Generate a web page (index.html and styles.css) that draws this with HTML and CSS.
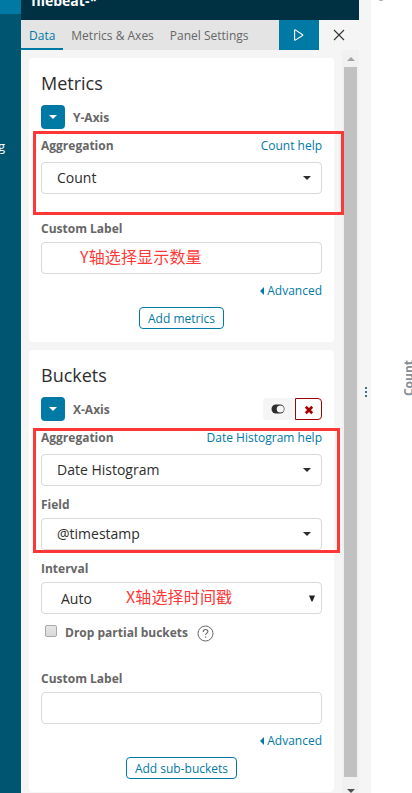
FILE: index.html
```html
<!DOCTYPE html>
<html lang="zh">
<head>
<meta charset="utf-8">
<title>Visualize editor</title>
<link rel="stylesheet" href="styles.css">
</head>
<body>
<div class="app">
  <nav class="nav"><div class="nav-active"></div><span class="nav-text">g</span></nav>
  <aside class="sidebar">
    <header class="index-name"><span>filebeat-*</span></header>
    <div class="tabs">
      <div class="tab active">Data</div>
      <div class="tab">Metrics &amp; Axes</div>
      <div class="tab">Panel Settings</div>
      <div class="run"><svg width="12" height="12" viewBox="0 0 12 12"><path d="M1.600 1.500v9.200q0 .7.7.4l7.300-4.600q.6-.4 0-.8L2.300.9q-.7-.3-.7.6z" fill="none" stroke="#fff" stroke-width="1.100"/></svg></div>
      <div class="close"><svg width="12" height="12" viewBox="0 0 12 12"><path d="M1 1l10 10M11 1L1 11" stroke="#333" stroke-width="1.100"/></svg></div>
    </div>
    <div class="body">
      <div class="cards">
        <section class="card">
          <h2>Metrics</h2>
          <div class="agg-head"><button class="toggle"><i class="caret"></i></button><b>Y-Axis</b></div>
          <div class="label first"><b>Aggregation</b><a>Count help</a></div>
          <div class="field">Count<i class="caret"></i></div>
          <div class="label custom-metric"><b>Custom Label</b></div>
          <div class="field"><span class="note note-y">Y轴选择显示数量</span></div>
          <div class="advanced"><i class="left"></i>Advanced</div>
          <button class="add add-metric">Add metrics</button>
        </section>
        <section class="card">
          <h2>Buckets</h2>
          <div class="agg-head"><button class="toggle"><i class="caret"></i></button><b>X-Axis</b>
            <div class="actions">
              <span class="switch"><svg width="14" height="10" viewBox="0 0 14 10"><path d="M5 .5h4a4.500 4.500 0 0 1 0 9H5a4.500 4.500 0 0 1 0-9z" fill="#2d2d2d"/><circle cx="9.300" cy="5" r="3.600" fill="#f5f5f5"/></svg></span>
              <span class="remove"><svg width="10" height="10" viewBox="0 0 10 10"><path d="M1.800 1.800l6.400 6.400M8.200 1.800L1.800 8.200" stroke="#a30000" stroke-width="2.700"/></svg></span>
            </div>
          </div>
          <div class="label first"><b>Aggregation</b><a>Date Histogram help</a></div>
          <div class="field">Date Histogram<i class="caret"></i></div>
          <div class="label"><b>Field</b></div>
          <div class="field">@timestamp<i class="caret"></i></div>
          <div class="label"><b>Interval</b></div>
          <div class="field native">Auto<span class="note note-x">X轴选择时间戳</span><svg class="arrow" width="6" height="7" viewBox="0 0 6 7"><path d="M0 .5h6L3.500 6.500h-1z" fill="#222"/></svg></div>
          <div class="check"><i class="box"></i><b>Drop partial buckets</b><svg width="17" height="17" viewBox="0 0 17 17" fill="none" stroke="#666"><circle cx="8.500" cy="8.500" r="7.500"/><path d="M6.200 6.900c0-3.200 4.700-3 4.700-.4 0 1.700-2.300 1.600-2.300 3.600M8.600 11.500v1.300" stroke-width="1.100"/></svg></div>
          <div class="label custom-bucket"><b>Custom Label</b></div>
          <div class="field"></div>
          <div class="advanced"><i class="left"></i>Advanced</div>
          <button class="add add-bucket">Add sub-buckets</button>
        </section>
      </div>
      <div class="scrollbar"><i class="up"></i><div class="thumb"></div><i class="down"></i></div>
    </div>
  </aside>
  <div class="resizer"><i></i><i></i><i></i></div>
  <main class="chart"><i class="dot"></i><span class="axis">Count</span></main>
  <div class="mark mark-y"></div>
  <div class="mark mark-x"></div>
</div>
</body>
</html>
```
FILE: styles.css
```css
* { box-sizing: border-box; }
body { margin: 0; font: 12px/18px "Open Sans", "Noto Sans CJK SC", sans-serif; color: #2d2d2d; background: #fff; }
i { display: block; }
b { color: #666; font-weight: 700; }
button { font: inherit; padding: 0; }
.app { position: relative; display: flex; width: 412px; height: 793px; overflow: hidden; }
.nav { position: relative; width: 21px; background: #005571; color: #fff; overflow: hidden; }
.nav-active { height: 14px; background: #0079a5; }
.nav-text { position: absolute; left: -2px; top: 137px; font-size: 13px; }
.sidebar { width: 338px; background: #f5f5f5; }
.index-name { height: 20px; padding-left: 10px; overflow: hidden; background: #003142; color: #fff; font-size: 14px; font-weight: 700; line-height: 20px; }
.index-name span { display: block; margin-top: -9px; }
.tabs { display: flex; height: 30px; background: #e4e4e4; color: #666; line-height: 31px; }
.tab { padding: 0 8px; white-space: nowrap; }
.active { color: #0079a5; border-bottom: 2px solid #0079a5; }
.run, .close { display: flex; align-items: center; justify-content: center; width: 40px; background: #0079a5; }
.run { margin-left: auto; }
.close { background: #f5f5f5; }
.body { display: flex; justify-content: space-between; height: 743px; }
.cards { display: flex; flex-direction: column; gap: 8px; width: 305px; margin: 8px 0 0 8px; }
.card { flex: none; padding: 12px 12px 13px; border-radius: 4px; background: #fff; }
h2 { height: 27px; margin: 0 0 8px; font-size: 18px; font-weight: 400; line-height: 27px; }
.agg-head { display: flex; align-items: center; gap: 8px; height: 24px; }
.agg-head b { padding-top: 2px; }
.toggle { display: flex; align-items: center; justify-content: center; width: 24px; height: 24px; border: 0; border-radius: 4px; background: #0079a5; color: #fff; }
.caret { width: 0; height: 0; border: 4px solid transparent; border-top-color: currentColor; border-bottom: 0; }
.actions { display: flex; gap: 2px; margin-left: auto; }
.switch, .remove { display: flex; align-items: center; justify-content: center; height: 22px; }
.switch { width: 30px; border-radius: 4px 0 0 4px; background: #f5f5f5; }
.remove { width: 27px; padding-top: 2px; border: 1px solid #a30000; border-radius: 0 4px 4px 0; }
.label { display: flex; justify-content: space-between; height: 18px; margin: 10px 0 4px; }
.first { margin: 8px 0 7px; }
.custom-metric { margin-top: 26px; }
.custom-bucket { margin-top: 28px; }
.label a, .advanced { color: #0079a5; }
.field { position: relative; display: flex; align-items: center; justify-content: space-between; height: 32px; padding: 0 10px 0 15px; border: 1px solid #d9d9d9; border-radius: 4px; font-size: 14px; }
.native { padding: 1px 6px 0 19px; }
.note { position: absolute; top: 1px; font-size: 16px; line-height: 24px; color: #ff3737; white-space: nowrap; font-family: "Noto Sans CJK SC", sans-serif; letter-spacing: .15px; }
.note-y { left: 38px; }
.note-x { left: 84px; }
.check { display: flex; align-items: center; height: 18px; margin-top: 10px; padding-left: 4px; }
.box { width: 12px; height: 12px; margin: -5px 8px 0 0; border: 1px solid #a9a9a9; border-radius: 2px; background: linear-gradient(#e6e6e6, #d9d9d9); }
.check svg { margin: 1px 0 0 9px; }
.advanced { display: flex; align-items: center; justify-content: flex-end; gap: 3px; height: 18px; margin-top: 8px; }
.left { width: 0; height: 0; border: 4px solid transparent; border-right-color: #0079a5; border-left: 0; }
.add { display: block; height: 22px; margin: 7px auto 0; border: 1px solid #0079a5; border-radius: 4px; background: #fff; color: #0079a5; line-height: 21px; }
.add-metric { width: 85px; }
.add-bucket { width: 111px; }
.scrollbar { display: flex; flex-direction: column; align-items: center; width: 17px; background: #f1f1f1; }
.up { width: 0; height: 0; margin: 7px 0 6px; border: 4px solid transparent; border-top: 0; border-bottom-color: #a3a3a3; }
.thumb { width: 13px; height: 712px; background: #c1c1c1; }
.down { width: 0; height: 0; margin-top: 12px; border: 4px solid transparent; border-bottom: 0; border-top-color: #505050; }
.resizer { display: flex; flex-direction: column; justify-content: center; align-items: flex-end; gap: 2px; width: 12px; padding: 0 4px 9px 0; background: #f5f5f5; }
.resizer i { width: 2px; height: 2px; background: #3f7088; }
.chart { position: relative; flex: 1; }
.dot { position: absolute; left: 7px; top: -5px; width: 6px; height: 6px; border-radius: 3px; background: #aaa; }
.axis { position: absolute; left: 29px; top: 360px; writing-mode: vertical-rl; transform: rotate(180deg); color: #848e96; font-weight: 700; }
.mark { position: absolute; border: 3px solid #ff3737; }
.mark-y { left: 33px; top: 131px; width: 311px; height: 84px; }
.mark-x { left: 33px; top: 428px; width: 307px; height: 125px; }
```
